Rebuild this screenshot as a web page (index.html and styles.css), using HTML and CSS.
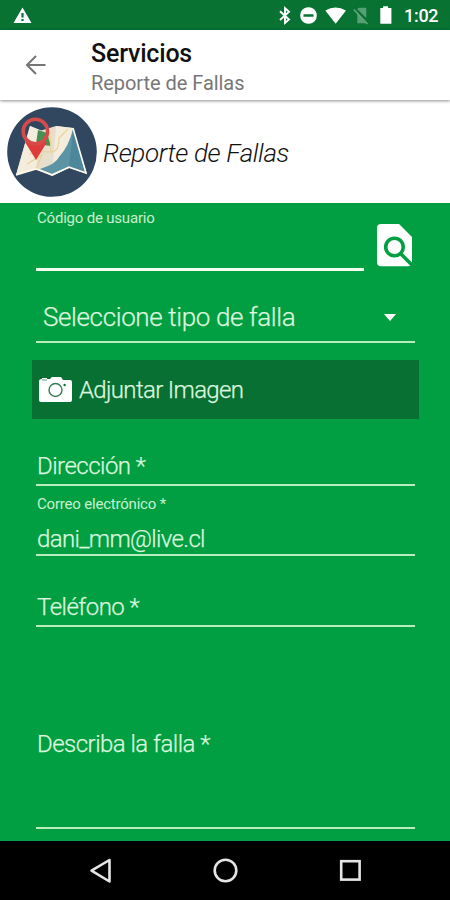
FILE: index.html
```html
<!DOCTYPE html>
<html lang="es">
<head>
<meta charset="utf-8">
<title>Servicios - Reporte de Fallas</title>
<link rel="stylesheet" href="styles.css">
</head>
<body>
<div class="screen">
  <div class="status">
    <svg width="450" height="30" viewBox="0 0 450 30" fill="#fff">
      <path fill-rule="evenodd" d="M22.5 7.5L13.5 23h18zM21.4 13h2.2v4.5h-2.2zM21.4 19h2.2v2h-2.2z"/>
      <path d="M280 11.2L289 19.5L285 23V8.2L289 11.8L280 20" fill="none" stroke="#fff" stroke-width="1.9"/>
      <path fill-rule="evenodd" d="M308.5 7.2a8.3 8.3 0 1 0 .01 0zM303.5 14.2h10v2.6h-10z"/>
      <path d="M325.3 10.5Q335.5 4.5 346 10.5L335.7 23.7z"/>
      <path d="M357.3 12.5V23.3H366zM357 9L359.3 7.8H366.3V18z" opacity=".32"/>
      <path d="M353.8 9.5L367.5 24" fill="none" stroke="#66a77c" stroke-width="1.5"/>
      <path d="M380.3 8h2.8V6.2h5V8h3.3v15.8h-11.1z"/>
    </svg>
    <span class="clock">1:02</span>
  </div>
  <header class="appbar">
    <svg class="back" width="22" height="22" viewBox="0 0 22 22" fill="none" stroke="#757575" stroke-width="2"><path d="M20.5 11H2M11 2L2 11L11 20"/></svg>
    <div><h1>Servicios</h1><p>Reporte de Fallas</p></div>
  </header>
  <section class="banner">
    <svg width="90" height="90" viewBox="0 0 90 90">
      <circle cx="45" cy="45" r="44.8" fill="#30475f"/>
      <path d="M23 19L34 23.5L49 19L66 21L80 67L62 61L45 69L29 62L9 68z" fill="#e7dece"/>
      <path d="M23 19L34 23.5L29 62L9 68zM49 19L66 21L62 61L45 69z" fill="#f4eddd"/>
      <path d="M66 22L78 65L62 60L45 67L33 62Q49 57 52 50Q62 39 66 22z" fill="#5c94a5"/>
      <path d="M66 22L78 65L62 60z" fill="#4d879b"/>
      <path d="M31 23L40 26L44 39L29 37z" fill="#459052"/>
      <path d="M22 47Q34 44 43 45T52 31L61 22M20 57L35 48L29 62M43 25L44 45" fill="none" stroke="#ead397" stroke-width="1.2"/>
      <path d="M9 68L29 62L45 68L62 60L79 66L66 21" fill="none" stroke="#fffaf0" stroke-width="1.6"/>
      <path d="M18 35L29 53L40 35z" fill="#dd3c3b"/>
      <circle cx="28.4" cy="24.5" r="12.2" fill="none" stroke="#d44b4a" stroke-width="3.6"/>
    </svg>
    <h2>Reporte de Fallas</h2>
  </section>
  <main class="form">
    <div class="coderow">
      <div class="field code"><label>Código de usuario</label></div>
      <svg width="36" height="43" viewBox="0 0 36 43">
        <path d="M4 0H22L35 13V38.3Q35 42.3 31 42.3H4Q0 42.3 0 38.3V4Q0 0 4 0z" fill="#fff"/>
        <g fill="none" stroke="#029f42" stroke-width="3.6"><circle cx="17.5" cy="23" r="8.8"/><path d="M23.5 29.5L35 41"/></g>
      </svg>
    </div>
    <div class="field select"><span>Seleccione tipo de falla</span><i class="caret"></i></div>
    <div class="attach">
      <svg width="34" height="26" viewBox="0 0 34 26">
        <path d="M3 2V1H8V2H11L13 0H22L24 3H31Q33 3 33 5V23Q33 25 31 25H2Q0 25 0 23V4Q0 2 3 2z" fill="#fff"/>
        <circle cx="16.5" cy="13" r="6.5" fill="none" stroke="#387e52" stroke-width="1.4"/><circle cx="25.6" cy="8" r="1.2" fill="#087033"/>
        <path d="M3 3H8" stroke="#087033" stroke-width=".7"/>
      </svg>
      <span>Adjuntar Imagen</span>
    </div>
    <div class="field address"><span>Dirección *</span></div>
    <div class="field mail"><label>Correo electrónico *</label><span>dani_mm@live.cl</span></div>
    <div class="field phone"><span>Teléfono *</span></div>
    <div class="field desc"><span>Describa la falla *</span></div>
  </main>
  <nav class="nav">
    <svg width="450" height="59" viewBox="0 0 450 59" fill="none" stroke="#e5e5e5" stroke-width="2.6">
      <path d="M109.5 19V40.5L91.5 29.7z" stroke-linejoin="round"/><circle cx="225.5" cy="29.5" r="10.8"/><rect x="341.2" y="20.2" width="18.4" height="18.4"/>
    </svg>
  </nav>
</div>
</body>
</html>
```
FILE: styles.css
```css
* { box-sizing: border-box; margin: 0; padding: 0; }
body { font-family: Roboto, sans-serif; background: #000; }
svg { display: block; flex: none; }
.screen { width: 450px; height: 900px; overflow: hidden; display: flex; flex-direction: column; }
.status { height: 30px; background: #087233; position: relative; flex: none; }
.clock { position: absolute; left: 404px; top: 5px; font-size: 18px; line-height: 22px; font-weight: 500; letter-spacing: -.3px; color: #fff; white-space: nowrap; }
.appbar { height: 70px; flex: none; background: #fff; display: flex; padding-left: 25px; position: relative; z-index: 1; box-shadow: 0 1px 3px rgba(0,0,0,.45); }
.back { margin: 24px 44px 0 0; }
h1 { font-size: 25px; line-height: 30px; font-weight: 500; letter-spacing: -.2px; margin-top: 9px; color: #111; white-space: nowrap; }
.appbar p { font-size: 20px; line-height: 24px; margin-top: 2px; letter-spacing: -.05px; color: #777; white-space: nowrap; }
.banner { height: 103px; flex: none; background: #fff; display: flex; padding: 7px 0 0 7px; }
h2 { font-size: 26px; line-height: 32px; font-weight: 300; font-style: italic; letter-spacing: -.35px; margin: 30px 0 0 6px; color: #111; white-space: nowrap; }
.form { height: 638px; flex: none; background: #029f42; padding: 0 31px 0 36px; color: #dcf6df; font-weight: 300; }
.form span, .form label { display: block; white-space: nowrap; font-size: 24px; line-height: 30px; letter-spacing: -.52px; -webkit-text-stroke: .25px currentColor; }
.form label { font-size: 15px; line-height: 20px; font-weight: 400; letter-spacing: -.2px; -webkit-text-stroke: 0; color: #c8efcd; }
.field { width: 379px; border-bottom: 2px solid #b8edbd; padding-left: 1px; }
.coderow { display: flex; }
.coderow svg { margin: 21px 0 0 13px; }
.field.code { width: 328px; height: 68px; border-bottom: 3px solid #f2fff0; padding-top: 5px; }
.select { height: 72px; display: flex; justify-content: space-between; padding: 30px 19px 0 7px; }
.form .select span { font-size: 26px; line-height: 32px; letter-spacing: -.38px; }
.caret { border: 6px solid transparent; border-top: 7px solid #fff; border-bottom: 0; height: 0; margin-top: 13px; }
.attach { width: 387px; height: 59px; margin: 17px 0 0 -4px; background: #087033; display: flex; align-items: center; padding-left: 7px; gap: 6px; }
.form .attach span, .form .mail span { letter-spacing: -.66px; }
.address { height: 67px; padding-top: 32px; }
.mail { height: 70px; padding-top: 8px; }
.mail span { margin-top: 10px; }
.phone { height: 71px; padding-top: 36px; }
.desc { height: 202px; padding-top: 102px; }
.nav { height: 59px; background: #000; }
```
